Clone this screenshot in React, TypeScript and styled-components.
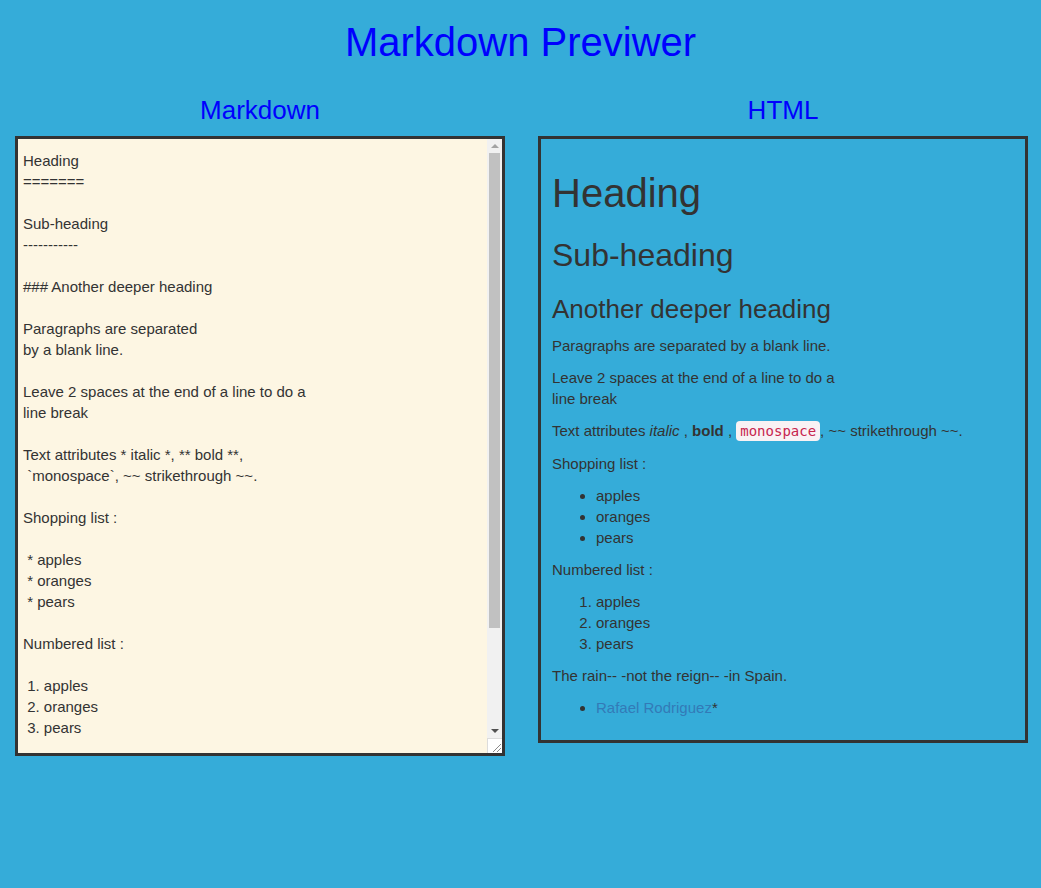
import React from "react";
import styled, { createGlobalStyle } from "styled-components";

const GlobalStyle = createGlobalStyle`
  html, body {
    margin: 0;
    padding: 0;
  }
  body {
    background: #35acd9;
    font-family: "Liberation Sans", Arial, sans-serif;
    font-size: 15px;
    line-height: 21px;
    color: #333;
  }
`;

const Page = styled.div`
  display: flex;
  flex-direction: column;
`;

const Title = styled.h1`
  margin: 20px 0 33px;
  font-size: 40px;
  font-weight: 400;
  line-height: 44px;
  text-align: center;
  color: #0000ff;
`;

const Columns = styled.div`
  display: grid;
  grid-template-columns: 490px 490px;
  column-gap: 33px;
  padding: 0 13px 0 15px;
`;

const Column = styled.section`
  display: flex;
  flex-direction: column;
`;

const ColumnTitle = styled.h2`
  margin: 0 0 12px;
  font-size: 26px;
  font-weight: 400;
  line-height: 27px;
  text-align: center;
  color: #0000ff;
`;

const EditorFrame = styled.div`
  position: relative;
  width: 490px;
  height: 620px;
`;

const Editor = styled.textarea`
  box-sizing: border-box;
  width: 100%;
  height: 100%;
  margin: 0;
  padding: 11px 20px 11px 5px;
  border: 3px solid #333;
  border-radius: 0;
  background: #fdf6e3;
  color: #333;
  font-family: "Liberation Sans", Arial, sans-serif;
  font-size: 15px;
  line-height: 21px;
  outline: none;
  display: block;
  resize: none;
  overflow: hidden;
`;

const Scrollbar = styled.div`
  position: absolute;
  top: 3px;
  right: 3px;
  bottom: 18px;
  width: 15px;
  display: flex;
  flex-direction: column;
  background: #f1f1f1;
`;

const ScrollButton = styled.div`
  height: 14px;
  flex: none;
  display: flex;
  align-items: center;
  justify-content: center;
`;

const ScrollTrack = styled.div`
  flex: 1;
  display: flex;
  flex-direction: column;
  padding: 0 2px;
`;

const Thumb = styled.div`
  height: 475px;
  background: #c1c1c1;
`;

const Corner = styled.div`
  position: absolute;
  right: 3px;
  bottom: 3px;
  width: 15px;
  height: 15px;
  box-sizing: border-box;
  background: #fff;
  border-top: 1px solid #dcdcdc;
  border-left: 1px solid #dcdcdc;
  display: flex;
  align-items: flex-end;
  justify-content: flex-end;
`;

const Preview = styled.div`
  box-sizing: border-box;
  width: 490px;
  padding: 12px 10px 11px 11px;
  border: 3px solid #333;
`;

const H1 = styled.h1`
  margin: 20px 0 10px;
  font-size: 40px;
  font-weight: 400;
  line-height: 1.1;
`;

const H2 = styled.h2`
  margin: 23px 0 10px;
  font-size: 32px;
  font-weight: 400;
  line-height: 1.1;
`;

const H3 = styled.h3`
  margin: 22px 0 11px;
  font-size: 26px;
  font-weight: 400;
  line-height: 1.1;
`;

const P = styled.p`
  margin: 0 0 11px;
`;

const List = styled.ul`
  margin: 0 0 11px;
  padding-left: 44px;
`;

const OList = styled.ol`
  margin: 0 0 11px;
  padding-left: 44px;
`;

const Code = styled.code`
  padding: 2px 4px;
  font-family: "DejaVu Sans Mono", "Liberation Mono", monospace;
  font-size: 14px;
  color: #c7254e;
  background: #f9f2f4;
  border-radius: 4px;
`;

const Link = styled.a`
  color: #337ab7;
  text-decoration: none;
`;

const markdown = `Heading
=======

Sub-heading
-----------

### Another deeper heading

Paragraphs are separated
by a blank line.

Leave 2 spaces at the end of a line to do a  
line break

Text attributes * italic *, ** bold **,
 \`monospace\`, ~~ strikethrough ~~.

Shopping list :

 * apples
 * oranges
 * pears

Numbered list :

 1. apples
 2. oranges
 3. pears

The rain-- -not the reign-- -in Spain.

 *[Rafael Rodriguez](https://github.com/rafael)*

`;

export default function App() {
  return (
    <Page>
      <GlobalStyle />
      <Title>Markdown Previwer</Title>
      <Columns>
        <Column>
          <ColumnTitle>Markdown</ColumnTitle>
          <EditorFrame>
            <Editor defaultValue={markdown} spellCheck={false} />
            <Scrollbar>
              <ScrollButton>
                <svg width="8" height="4" viewBox="0 0 8 4">
                  <polygon points="0,4 8,4 4,0" fill="#a3a3a3" />
                </svg>
              </ScrollButton>
              <ScrollTrack>
                <Thumb />
              </ScrollTrack>
              <ScrollButton>
                <svg width="8" height="4" viewBox="0 0 8 4">
                  <polygon points="0,0 8,0 4,4" fill="#505050" />
                </svg>
              </ScrollButton>
            </Scrollbar>
            <Corner>
              <svg width="13" height="13" viewBox="0 0 13 13">
                <line x1="4" y1="12" x2="12" y2="4" stroke="#8a8a8a" strokeWidth="1" />
                <line x1="8" y1="12" x2="12" y2="8" stroke="#8a8a8a" strokeWidth="1" />
              </svg>
            </Corner>
          </EditorFrame>
        </Column>
        <Column>
          <ColumnTitle>HTML</ColumnTitle>
          <Preview>
            <H1>Heading</H1>
            <H2>Sub-heading</H2>
            <H3>Another deeper heading</H3>
            <P>Paragraphs are separated by a blank line.</P>
            <P>
              Leave 2 spaces at the end of a line to do a
              <br />
              line break
            </P>
            <P>
              Text attributes <em>italic</em> , <strong>bold</strong> ,{" "}
              <Code>monospace</Code>, ~~ strikethrough ~~.
            </P>
            <P>Shopping list :</P>
            <List>
              <li>apples</li>
              <li>oranges</li>
              <li>pears</li>
            </List>
            <P>Numbered list :</P>
            <OList>
              <li>apples</li>
              <li>oranges</li>
              <li>pears</li>
            </OList>
            <P>The rain-- -not the reign-- -in Spain.</P>
            <List>
              <li>
                <Link href="#">Rafael Rodriguez</Link>*
              </li>
            </List>
          </Preview>
        </Column>
      </Columns>
    </Page>
  );
}
